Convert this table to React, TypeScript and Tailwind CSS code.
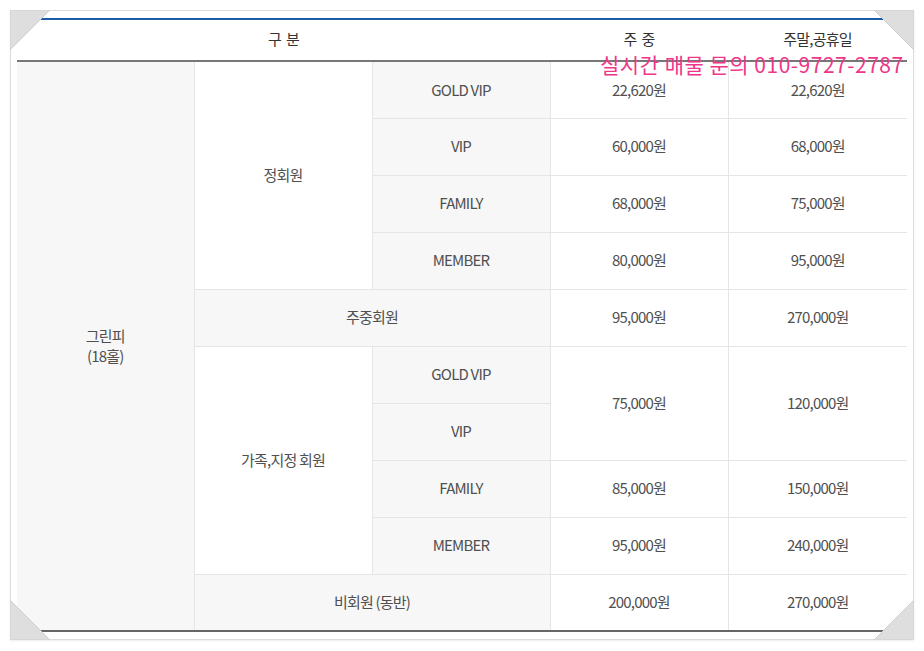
import React from "react"

const font = { fontFamily: '"Noto Sans CJK KR", "Noto Sans", sans-serif' }

function Price({ children, rowSpan }: { children: React.ReactNode; rowSpan?: number }) {
  return (
    <td rowSpan={rowSpan} className="border border-[#e5e5e5] bg-white text-center">
      {children}
    </td>
  )
}

function Grade({ children }: { children: React.ReactNode }) {
  return <td className="border border-[#e5e5e5] bg-[#f7f7f7] text-center">{children}</td>
}

export default function App() {
  return (
    <div className="w-[924px] h-[651px] bg-white p-[10px]" style={font}>
      <div className="relative w-[904px] h-[630px] border border-[#dcdcdc] shadow-[0_1px_2px_rgba(0,0,0,0.08)] px-[6px] pt-[7px]">
        <table className="w-[890px] table-fixed border-collapse text-[15px] tracking-[-0.8px] text-[#505050]">
          <colgroup>
            <col className="w-[177px]" />
            <col className="w-[178px]" />
            <col className="w-[178px]" />
            <col className="w-[178px]" />
            <col className="w-[179px]" />
          </colgroup>
          <thead>
            <tr className="h-[42px] border-t-2 border-t-[#1d5ca6] border-b-2 border-b-[#777]">
              <th colSpan={3} className="font-normal text-[#333] text-center pb-[2px]">구&nbsp;&nbsp;분</th>
              <th className="font-normal text-[#333] text-center pb-[2px]">주&nbsp;&nbsp;중</th>
              <th className="font-normal text-[#333] text-center pb-[2px]">주말,공휴일</th>
            </tr>
          </thead>
          <tbody className="border-b-2 border-b-[#666]">
            <tr className="h-[57px]">
              <td rowSpan={10} className="border border-[#e5e5e5] border-l-0 bg-[#f7f7f7] text-center leading-[20px]">
                그린피
                <br />
                (18홀)
              </td>
              <td rowSpan={4} className="border border-[#e5e5e5] bg-white text-center">정회원</td>
              <Grade>GOLD VIP</Grade>
              <Price>22,620원</Price>
              <td className="border border-[#e5e5e5] border-r-0 text-center">22,620원</td>
            </tr>
            <tr className="h-[57px]">
              <Grade>VIP</Grade>
              <Price>60,000원</Price>
              <td className="border border-[#e5e5e5] border-r-0 text-center">68,000원</td>
            </tr>
            <tr className="h-[57px]">
              <Grade>FAMILY</Grade>
              <Price>68,000원</Price>
              <td className="border border-[#e5e5e5] border-r-0 text-center">75,000원</td>
            </tr>
            <tr className="h-[57px]">
              <Grade>MEMBER</Grade>
              <Price>80,000원</Price>
              <td className="border border-[#e5e5e5] border-r-0 text-center">95,000원</td>
            </tr>
            <tr className="h-[57px]">
              <td colSpan={2} className="border border-[#e5e5e5] bg-[#f7f7f7] text-center">주중회원</td>
              <Price>95,000원</Price>
              <td className="border border-[#e5e5e5] border-r-0 text-center">270,000원</td>
            </tr>
            <tr className="h-[57px]">
              <td rowSpan={4} className="border border-[#e5e5e5] bg-white text-center">가족,지정 회원</td>
              <Grade>GOLD VIP</Grade>
              <Price rowSpan={2}>75,000원</Price>
              <td rowSpan={2} className="border border-[#e5e5e5] border-r-0 text-center">120,000원</td>
            </tr>
            <tr className="h-[57px]">
              <Grade>VIP</Grade>
            </tr>
            <tr className="h-[57px]">
              <Grade>FAMILY</Grade>
              <Price>85,000원</Price>
              <td className="border border-[#e5e5e5] border-r-0 text-center">150,000원</td>
            </tr>
            <tr className="h-[57px]">
              <Grade>MEMBER</Grade>
              <Price>95,000원</Price>
              <td className="border border-[#e5e5e5] border-r-0 text-center">240,000원</td>
            </tr>
            <tr className="h-[57px]">
              <td colSpan={2} className="border border-[#e5e5e5] border-b-0 bg-[#f7f7f7] text-center">비회원 (동반)</td>
              <Price>200,000원</Price>
              <td className="border border-[#e5e5e5] border-r-0 border-b-0 text-center">270,000원</td>
            </tr>
          </tbody>
        </table>

        {/* pink overlay text */}
        <div className="absolute left-[589px] top-[42px] text-[21px] leading-[22px] text-[#f0368a] tracking-[0.5px] whitespace-nowrap">
          실시간 매물 문의 010-9727-2787
        </div>

        {/* corner folds */}
        <svg className="absolute -left-px -top-px" width="40" height="40">
          <polygon points="0,0 40,0 0,40" fill="#dedede" stroke="#cfcfcf" />
        </svg>
        <svg className="absolute -right-px -top-px" width="40" height="40">
          <polygon points="0,0 40,0 40,40" fill="#dedede" stroke="#cfcfcf" />
        </svg>
        <svg className="absolute -left-px -bottom-px" width="40" height="40">
          <polygon points="0,0 0,40 40,40" fill="#dedede" stroke="#cfcfcf" />
        </svg>
        <svg className="absolute -right-px -bottom-px" width="40" height="40">
          <polygon points="40,0 40,40 0,40" fill="#dedede" stroke="#cfcfcf" />
        </svg>
      </div>
    </div>
  )
}
